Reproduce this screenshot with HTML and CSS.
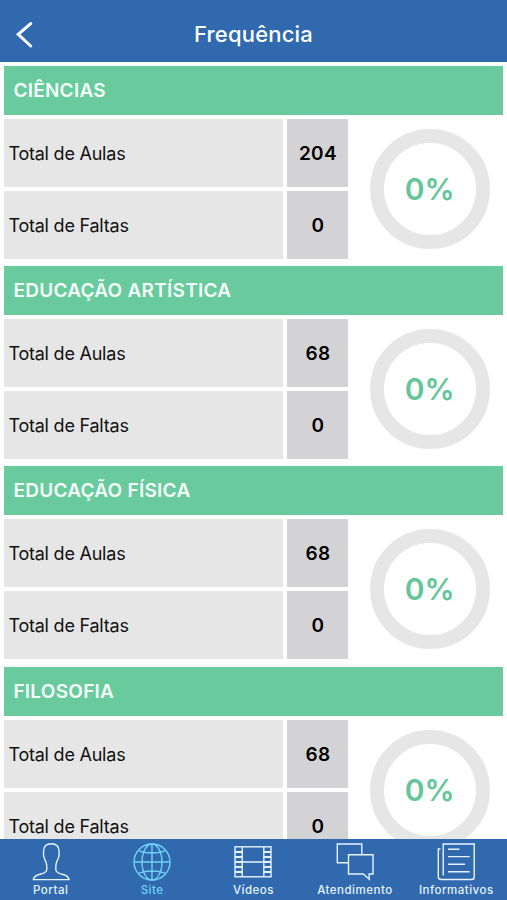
FILE: index.html
```html
<!DOCTYPE html>
<html lang="pt-BR">
<head>
    <meta charset="UTF-8">
    <meta name="viewport" content="width=device-width, initial-scale=1.0">
    <title>Frequência</title>
    <link rel="stylesheet" href="styles.css">
</head>
<body>
    <div class="app">
        <!-- Top bar -->
        <header class="topbar">
            <button class="back" type="button" aria-label="Voltar">
                <svg width="20" height="30" viewBox="0 0 20 30">
                    <path d="M16.7 4.6 L4.2 15.4 L16.7 27"/>
                </svg>
            </button>
            <h1>Frequência</h1>
        </header>

        <!-- List of subjects -->
        <main class="content">
            <section class="subject">
                <h2>CIÊNCIAS</h2>
                <div class="details">
                    <div class="label">Total de Aulas</div>
                    <div class="value">204</div>
                    <div class="label">Total de Faltas</div>
                    <div class="value">0</div>
                    <div class="chart"><div class="ring">0%</div></div>
                </div>
            </section>

            <section class="subject">
                <h2>EDUCAÇÃO ARTÍSTICA</h2>
                <div class="details">
                    <div class="label">Total de Aulas</div>
                    <div class="value">68</div>
                    <div class="label">Total de Faltas</div>
                    <div class="value">0</div>
                    <div class="chart"><div class="ring">0%</div></div>
                </div>
            </section>

            <section class="subject">
                <h2>EDUCAÇÃO FÍSICA</h2>
                <div class="details">
                    <div class="label">Total de Aulas</div>
                    <div class="value">68</div>
                    <div class="label">Total de Faltas</div>
                    <div class="value">0</div>
                    <div class="chart"><div class="ring">0%</div></div>
                </div>
            </section>

            <section class="subject">
                <h2>FILOSOFIA</h2>
                <div class="details">
                    <div class="label">Total de Aulas</div>
                    <div class="value">68</div>
                    <div class="label">Total de Faltas</div>
                    <div class="value">0</div>
                    <div class="chart"><div class="ring">0%</div></div>
                </div>
            </section>
        </main>

        <!-- Bottom tabs -->
        <nav class="tabs">
            <a class="tab">
                <svg width="40" height="40" viewBox="0 0 40 40">
                    <path d="M20.3 1.8 C15.3 1.8 12.6 4.3 12.6 8.8 C12.6 10.5 12.3 11.5 12.6 13.5 C13 16.5 14 18 15 20 C15.8 22 16 24 15.8 27.5 C15.5 30.8 12.5 31.3 9 32.3 C5 33.3 2.8 34.5 2.3 37.6 H38.1 C37.6 34.5 35.4 33.3 31.4 32.3 C27.9 31.3 25 30.8 24.8 27.5 C24.6 24 24.8 22 25.6 20 C26.6 18 27.6 16.5 28 13.5 C28.3 11.5 28 10.5 28 8.8 C28 4.3 25.3 1.8 20.3 1.8 Z"/>
                </svg>
                <span>Portal</span>
            </a>
            <a class="tab active">
                <svg width="40" height="40" viewBox="0 0 40 40">
                    <circle cx="20" cy="20" r="18"/>
                    <ellipse cx="20" cy="20" rx="10" ry="18"/>
                    <path d="M20 2 V38 M2 20 H38 M6.5 8.8 Q20 13.2 33.5 8.8 M6.5 31.2 Q20 26.8 33.5 31.2"/>
                </svg>
                <span>Site</span>
            </a>
            <a class="tab">
                <svg width="40" height="40" viewBox="0 0 40 40">
                    <rect x="2" y="4.8" width="36" height="30"/>
                    <path d="M9.2 4.8 V34.8 M30.8 4.8 V34.8 M9.2 20 H30.8"/>
                    <path class="holes" d="M2 10 H9.2 M2 15 H9.2 M2 20 H9.2 M2 25 H9.2 M2 30 H9.2 M30.8 10 H38 M30.8 15 H38 M30.8 20 H38 M30.8 25 H38 M30.8 30 H38"/>
                </svg>
                <span>Vídeos</span>
            </a>
            <a class="tab">
                <svg width="40" height="40" viewBox="0 0 40 40">
                    <path d="M13 20.7 H2.3 V2 H26.8 V12.8"/>
                    <path d="M13.5 12.8 H38 V32 H34.2 V37.2 L28.3 32 H13.5 Z"/>
                </svg>
                <span>Atendimento</span>
            </a>
            <a class="tab">
                <svg width="40" height="40" viewBox="0 0 40 40">
                    <path d="M7.2 33.5 V2 H38.2 V35 Q38.2 37.5 35.7 37.5 H5 Q2.3 37.5 2.3 34.8 V7 H4.5"/>
                    <path d="M12 7.2 H23.5 M12 14.6 H33.7 M12 22.2 H29 M12 29.8 H33.7"/>
                </svg>
                <span>Informativos</span>
            </a>
        </nav>
    </div>
</body>
</html>
```
FILE: styles.css
```css
* {
    box-sizing: border-box;
}

body {
    margin: 0;
    font-family: Inter, "Liberation Sans", sans-serif;
    background-color: #fff;
    color: #111;
}

.app {
    display: flex;
    flex-direction: column;
    height: 100vh;
    overflow: hidden;
}

/* Top bar */
.topbar {
    display: grid;
    grid-template-columns: 50px 1fr 50px;
    align-items: center;
    flex: none;
    height: 62px;
    padding-top: 5px;
    background-color: #3069ae;
    color: #fff;
}

.topbar h1 {
    margin: 0;
    font-size: 22px;
    font-weight: 500;
    line-height: 30px;
    letter-spacing: 0.2px;
    text-align: center;
}

.back {
    display: flex;
    padding: 0 0 0 14px;
    border: none;
    background: none;
}

.back svg {
    fill: none;
    stroke: #fff;
    stroke-width: 3;
    stroke-linecap: round;
}

/* Subjects */
.content {
    flex: 1;
    min-height: 0;
    overflow: hidden;
    padding: 3.5px 4px 0 4.4px;
}

.subject {
    margin-bottom: 7.4px;
}

.subject h2 {
    height: 49px;
    margin: 0 0 4px;
    padding-left: 9px;
    background-color: #68ca9d;
    color: #f4fffa;
    font-size: 19px;
    font-weight: 600;
    line-height: 50px;
    letter-spacing: 0.26px;
}

.details {
    display: grid;
    grid-template-columns: 279px 61px 1fr;
    grid-template-rows: 68px 68px;
    gap: 4px;
}

.label,
.value {
    font-size: 18px;
    line-height: 69px;
}

.label {
    padding-left: 4px;
    background-color: #e6e6e6;
    letter-spacing: -0.22px;
}

.value {
    background-color: #d3d3d5;
    color: #000;
    font-size: 19px;
    font-weight: 600;
    letter-spacing: 0.3px;
    text-align: center;
}

.chart {
    grid-column: 3;
    grid-row: 1 / 3;
    display: flex;
    align-items: center;
    justify-content: center;
    padding-left: 4px;
}

/* Attendance ring */
.ring {
    width: 120px;
    height: 120px;
    border: 14.5px solid #e6e6e6;
    border-radius: 50%;
    color: #64c59a;
    font-size: 30px;
    font-weight: 600;
    line-height: 93px;
    text-align: center;
}

/* Bottom tabs */
.tabs {
    display: grid;
    grid-template-columns: repeat(5, 1fr);
    flex: none;
    height: 61px;
    padding-top: 3px;
    background-color: #3069ae;
}

.tab {
    display: flex;
    flex-direction: column;
    align-items: center;
    color: #e6f3ff;
    font-size: 11.5px;
    font-weight: 500;
    line-height: 16px;
    letter-spacing: 0.5px;
}

.tab svg {
    fill: none;
    stroke: currentColor;
    stroke-width: 1.4;
}

.tab .holes {
    stroke-width: 1.8;
}

.tab.active {
    color: #6fd3f5;
}
```
